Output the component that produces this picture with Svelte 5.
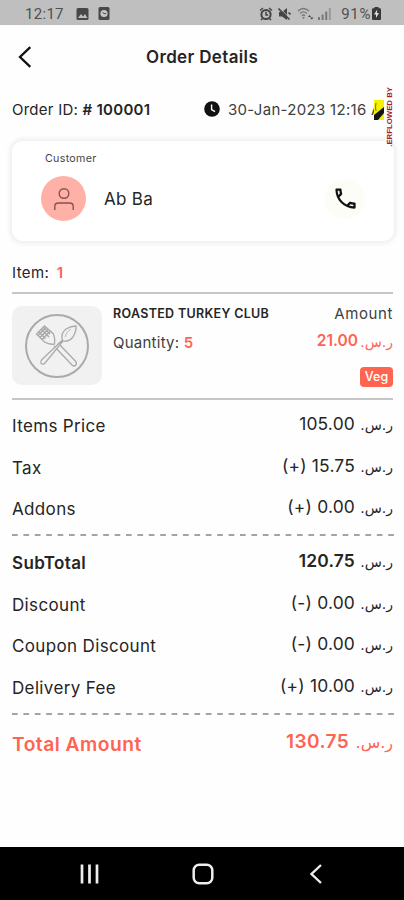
<script lang="ts">
	type Line = { label: string; value: string; strong?: boolean };

	const currency = 'ر.س.';

	const charges: Line[] = [
		{ label: 'Items Price', value: '105.00' },
		{ label: 'Tax', value: '(+) 15.75' },
		{ label: 'Addons', value: '(+) 0.00' }
	];

	const totals: Line[] = [
		{ label: 'SubTotal', value: '120.75', strong: true },
		{ label: 'Discount', value: '(-) 0.00' },
		{ label: 'Coupon Discount', value: '(-) 0.00' },
		{ label: 'Delivery Fee', value: '(+) 10.00' }
	];
</script>

{#snippet money(value: string)}
	<span class="money">
		<span class="value">{value}</span>
		<span class="currency" dir="rtl">{currency}</span>
	</span>
{/snippet}

{#snippet lines(items: Line[])}
	{#each items as line}
		<div class="line" class:strong={line.strong}>
			<span class="label">{line.label}</span>
			{@render money(line.value)}
		</div>
	{/each}
{/snippet}

{#snippet divider()}
	<svg class="dashes" width="382" height="2" viewBox="0 0 382 2" aria-hidden="true">
		<path d="M0 1H382" stroke="#858585" stroke-width="1.4" stroke-dasharray="5.7 5.7" />
	</svg>
{/snippet}

<div class="screen">
	<div class="status">
		<span class="clock">12:17</span>
		<svg class="photo" width="13" height="12" viewBox="0 0 13 12">
			<rect x="0.5" width="12" height="12" rx="1.5" fill="#484848" />
			<path d="M2 10l3-4 2 2.4L9 6l2.4 4z" fill="#bfbfbf" />
		</svg>
		<svg class="timer" width="12" height="13" viewBox="0 0 12 13">
			<rect x="0.5" width="11" height="13" rx="1.5" fill="#484848" />
			<circle cx="6" cy="6.5" r="3.6" fill="#c8c8c8" />
			<path d="M4.5 5L6 6.8l2.2-.5" fill="none" stroke="#484848" />
		</svg>
		<svg class="alarm" width="14" height="14" viewBox="0 0 14 14" fill="none" stroke="#444">
			<circle cx="7" cy="7.5" r="4.6" stroke-width="2" />
			<path d="M1 3.5L4 1M10 1l3 2.5M3.5 11.5L2 13M10.5 11.5L12 13M7 4.8V8h2.2" stroke-width="1.5" />
		</svg>
		<svg class="mute" width="13" height="14" viewBox="0 0 13 14">
			<path d="M1 5h3l5-4v12L4 9.5H1z" fill="#444" />
			<path d="M2 1l11 12" stroke="#bfbfbf" stroke-width="1" />
			<path d="M.5 1.5l11 11M10.5 5.5l2 2" stroke="#444" stroke-width="1.6" />
		</svg>
		<svg class="wifi" width="17" height="13" viewBox="0 0 17 13" fill="none" stroke="#777">
			<path d="M1 4q5.5-5 11 0M3 6.5q3.5-3.2 7 0M5 8.7q1.5-1.5 3 0" stroke-width="1.3" />
			<path d="M6.5 12l-1.3-1.8h2.6z" fill="#666" stroke="none" />
			<path d="M11 10l1.5-2 1.5 2zM13 10.5h3.5l-1.7 2z" fill="#444" stroke="none" />
		</svg>
		<svg class="signal" width="13" height="12" viewBox="0 0 13 12">
			<path d="M0 9h2v3H0zM3.6 6.5h2V12h-2zM7.2 3.5h2V12h-2z" fill="#777" />
			<path d="M10.8 0h2v12h-2z" fill="#999" />
		</svg>
		<span class="percent">91%</span>
		<svg class="battery" width="9" height="13" viewBox="0 0 9 13">
			<path d="M2.5 0h4v1.2H8q1 0 1 1V12q0 1-1 1H1q-1 0-1-1V2.2q0-1 1-1h1.5z" fill="#383838" />
			<path d="M5.2 2.5L2 7.5h2V11l3-5H5z" fill="#ddd" />
		</svg>
	</div>

	<header class="top">
		<svg class="back" width="14" height="22" viewBox="0 0 14 22" aria-label="Back">
			<path d="M12.3 1.2L2 11l10.3 9.8" fill="none" stroke="#111" stroke-width="2.3" />
		</svg>
		<h1>Order Details</h1>
	</header>

	<div class="order">
		<span class="order-id">Order ID: <b># 100001</b></span>
		<svg class="time-icon" width="16" height="16" viewBox="0 0 16 16">
			<circle cx="8" cy="8" r="7.8" fill="#111" />
			<path d="M7.6 3.5v5l3.4 2.2" fill="none" stroke="#fff" stroke-width="1.4" />
		</svg>
		<span class="date">30-Jan-2023 12:16 A</span>
		<div class="overflow">
			<svg width="10" height="20" viewBox="0 0 10 20">
				<path d="M0 0h10v20H0z" fill="#f5f000" />
				<path d="M0 15L10 7v6L4 20H0z" fill="#141414" />
				<path d="M2 3q-1 4 0 8" fill="none" stroke="#77740a" />
			</svg>
			<span class="overflow-text">.ERFLOWED BY</span>
		</div>
	</div>

	<section class="customer">
		<span class="caption">Customer</span>
		<div class="person">
			<span class="avatar">
				<svg width="22" height="24" viewBox="0 0 22 24" fill="none" stroke="#86534d" stroke-width="1.4">
					<circle cx="11" cy="6.5" r="4.8" />
					<path d="M1.8 23v-3.5q0-3.5 3.500-3.5h11.4q3.5 0 3.5 3.5V23" />
				</svg>
			</span>
			<span class="name">Ab Ba</span>
			<span class="call">
				<svg width="27" height="27" viewBox="0 0 24 24">
					<path
						d="M6.54 5c.06.89.21 1.76.45 2.59l-1.2 1.2c-.41-1.2-.67-2.47-.76-3.79h1.51m9.86 12.02c.85.24 1.72.39 2.6.45v1.49c-1.32-.09-2.59-.35-3.8-.75l1.2-1.19M7.5 3H4c-.55 0-1 .45-1 1 0 9.39 7.61 17 17 17 .55 0 1-.45 1-1v-3.49c0-.55-.45-1-1-1-1.24 0-2.45-.2-3.57-.57-.35-.11-.74-.03-1.02.24l-2.2 2.2c-2.83-1.45-5.15-3.76-6.59-6.59l2.2-2.2c.28-.28.36-.67.25-1.02C8.7 6.45 8.5 5.25 8.5 4c0-.55-.45-1-1-1z"
						fill="#111"
					/>
				</svg>
			</span>
		</div>
	</section>

	<div class="count">Item: <b>1</b></div>

	<article class="item">
		<span class="thumb">
			<svg width="66" height="66" viewBox="0 0 66 66" fill="none" stroke="#aaa" stroke-width="1.3">
				<circle cx="33" cy="33" r="31" stroke-width="2" />
				<path d="M30 33L48 52q2 2 3.8 0 1.5-2-.5-4L34 30" />
				<path d="M20.5 13l-8 8 8 8q5 3 10 2 1-5-1-10z" />
				<path d="M14 22.5l8-8M16 24.5l8-8M18 26.5l8-8M14.5 18.500l7 7M17 16l8 8M19 14l7 7" stroke-width="1.6" />
				<path
					d="M38.5 27Q36 21 42 16q5-3 10-3 .5 5-3 11-4 5-10 4L21 50q-2 2-4 .5-1-2 1-4z"
					fill="#f1f1f1"
				/>
				<path d="M47 16q-5 3-6 8" stroke-width="0.8" />
			</svg>
		</span>
		<div class="info">
			<h2>ROASTED TURKEY CLUB</h2>
			<p>Quantity: <b>5</b></p>
		</div>
		<div class="price">
			<span class="amount">Amount</span>
			{@render money('21.00')}
			<span class="tag">Veg</span>
		</div>
	</article>

	<section class="bill">
		{@render lines(charges)}
		{@render divider()}
		{@render lines(totals)}
		{@render divider()}
		<div class="line grand">
			<span class="label">Total Amount</span>
			{@render money('130.75')}
		</div>
	</section>

	<nav class="navbar">
		<svg width="20" height="20" viewBox="0 0 20 20">
			<path d="M2 0.5v19M9.5 0.5v19M17 0.5v19" stroke="#eee" stroke-width="2.7" />
		</svg>
		<svg class="home" width="22" height="22" viewBox="0 0 22 22">
			<rect x="1.7" y="1.7" width="18.6" height="18.6" rx="5.5" fill="none" stroke="#eee" stroke-width="2.5" />
		</svg>
		<svg width="14" height="20" viewBox="0 0 14 20">
			<path d="M12 1L2.5 10l9.5 9" fill="none" stroke="#eee" stroke-width="2.4" />
		</svg>
	</nav>
</div>

<style>
	:global(body) {
		margin: 0;
		background: #fff;
	}

	.screen {
		width: 404px;
		height: 900px;
		display: flex;
		flex-direction: column;
		overflow: hidden;
		background: #fefefe;
		color: #252525;
		font-family: Inter, Roboto, sans-serif;
		font-size: 15px;
	}

	svg {
		display: block;
		flex-shrink: 0;
	}

	b {
		font-weight: 600;
	}

	.status {
		height: 25px;
		padding: 2px 23px 0 25px;
		box-sizing: border-box;
		display: flex;
		align-items: center;
		background: #bfbfbf;
		color: #505050;
		font-family: Roboto, sans-serif;
		font-size: 15px;
	}

	.clock {
		width: 51px;
		letter-spacing: 0.3px;
	}

	.timer {
		margin-left: 9px;
	}

	.alarm {
		margin-left: auto;
	}

	.mute {
		margin-left: 5px;
	}

	.wifi {
		margin-left: 6px;
	}

	.signal {
		margin-left: 4px;
	}

	.percent {
		margin-left: 10px;
		margin-right: 1px;
		letter-spacing: 0.6px;
	}

	.top {
		height: 64px;
		padding-left: 18px;
		display: flex;
		align-items: center;
	}

	h1 {
		margin: 0 0 0 114px;
		font-size: 17px;
		font-weight: 600;
		letter-spacing: 0.35px;
	}

	.order {
		position: relative;
		height: 40px;
		padding-left: 12px;
		display: flex;
		align-items: center;
	}

	.order-id {
		width: 192px;
		letter-spacing: 0.25px;
	}

	.date {
		margin-left: 8px;
		color: #404040;
		letter-spacing: 0.3px;
		white-space: nowrap;
	}

	/* debug stripe painted over the clipped end of the row */
	.overflow {
		position: absolute;
		top: -2px;
		left: 374px;
		height: 58px;
		display: flex;
		align-items: flex-start;
		gap: 1px;
	}

	.overflow svg {
		margin-top: 13px;
	}

	.overflow-text {
		writing-mode: vertical-rl;
		transform: rotate(180deg);
		color: #a3202c;
		font-family: "Liberation Sans", sans-serif;
		font-size: 7.8px;
		font-weight: 700;
		line-height: 9px;
		white-space: nowrap;
	}

	.customer {
		height: 100px;
		margin: 12px 10px 0 12px;
		padding: 11px 29px 0;
		box-sizing: border-box;
		border-radius: 11px;
		background: #fff;
		box-shadow: 0 0 5px 2px #ececec;
	}

	.caption {
		display: block;
		padding-left: 4px;
		font-size: 10.7px;
		line-height: 14px;
		letter-spacing: 0.3px;
		color: #444;
	}

	.person {
		display: flex;
		align-items: center;
		margin-top: 10px;
	}

	.avatar {
		width: 45px;
		height: 45px;
		display: grid;
		place-items: center;
		border-radius: 50%;
		background: #ffb1a8;
	}

	.name {
		margin-left: 18px;
		font-size: 17px;
		letter-spacing: 0.3px;
	}

	.call {
		width: 40px;
		height: 40px;
		margin-left: auto;
		display: grid;
		place-items: center;
		border-radius: 50%;
		background: #fdfdf8;
	}

	.count {
		height: 51px;
		padding: 22px 12px 0;
		box-sizing: border-box;
		line-height: 19px;
		letter-spacing: 0.4px;
	}

	.count b {
		margin-left: 3px;
		color: #ff6450;
	}

	.item {
		height: 108px;
		margin: 0 11px 0 12px;
		box-sizing: border-box;
		display: flex;
		border-top: 2px solid #c6c6c6;
		border-bottom: 2px solid #c6c6c6;
	}

	.thumb {
		width: 90px;
		height: 79px;
		margin-top: 12px;
		display: grid;
		place-items: center;
		border-radius: 10px;
		background: #f1f1f1;
	}

	.info {
		margin: 12px 0 0 11px;
	}

	h2 {
		margin: 0;
		font-size: 12.5px;
		font-weight: 600;
		line-height: 16px;
		letter-spacing: 0.32px;
		white-space: nowrap;
	}

	p {
		margin: 11px 0 0;
		line-height: 20px;
		letter-spacing: 0.25px;
		color: #404040;
	}

	p b {
		color: #ff6450;
	}

	.price {
		margin-left: auto;
		display: flex;
		flex-direction: column;
		align-items: flex-end;
		padding-top: 10px;
	}

	.amount {
		line-height: 20px;
		letter-spacing: 0.6px;
		color: #404040;
	}

	.tag {
		width: 33px;
		height: 20px;
		margin-top: 15px;
		border-radius: 4px;
		background: #ff6450;
		color: #fff;
		font-size: 12.5px;
		font-weight: 500;
		line-height: 20px;
		text-align: center;
	}

	.money {
		display: flex;
		align-items: center;
		gap: 5px;
		line-height: 20px;
	}

	.price .money {
		margin-top: 6px;
		gap: 2px;
		color: #ff6450;
		font-weight: 600;
	}

	.price .value {
		font-size: 15.5px;
	}

	.currency {
		width: 33px;
		padding-top: 2px;
		font-family: "DejaVu Sans", sans-serif;
		font-size: 14px;
		font-weight: 400;
		white-space: nowrap;
	}

	.bill {
		flex: 1;
		padding: 5px 11px 0 12px;
	}

	.line {
		height: 41.7px;
		display: flex;
		align-items: center;
		justify-content: space-between;
		font-size: 17px;
	}

	.label {
		letter-spacing: 0.35px;
	}

	.line .money {
		margin-top: -4px;
	}

	.line .value {
		font-size: 17.4px;
		letter-spacing: 0.2px;
	}

	.line.strong {
		font-weight: 600;
	}

	.dashes {
		margin: 4px 0 6px;
	}

	.line.grand {
		height: 46px;
		color: #ff6450;
		font-size: 19.2px;
		font-weight: 600;
	}

	.grand .label {
		letter-spacing: 0.5px;
	}

	.grand .value {
		font-size: 19px;
		letter-spacing: 0.4px;
	}

	.grand .currency {
		width: 39px;
		font-size: 16px;
	}

	.navbar {
		height: 53px;
		padding: 0 81px 0 80px;
		box-sizing: border-box;
		display: flex;
		align-items: center;
		justify-content: space-between;
		background: #000;
	}

	.home {
		margin-right: 4px;
	}
</style>
